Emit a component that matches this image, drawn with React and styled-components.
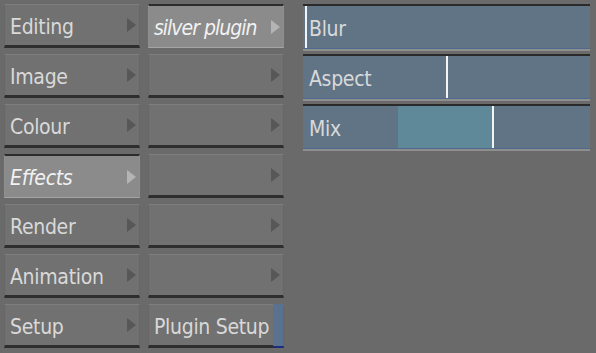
import React from "react";
import styled, { createGlobalStyle } from "styled-components";

const GlobalStyle = createGlobalStyle`
	html, body {
		margin: 0;
		padding: 0;
		background-color: #6a6a6a;
	}
`;

const menus = [
	{ label: "Editing", sub: "silver plugin", subActive: true },
	{ label: "Image" },
	{ label: "Colour" },
	{ label: "Effects", active: true },
	{ label: "Render" },
	{ label: "Animation" },
	{ label: "Setup", plugin: true },
];

const fields = [
	{ label: "Blur", marker: 2 },
	{ label: "Aspect", marker: 143 },
	{ label: "Mix", marker: 189, fillFrom: 95 },
];

export default function App() {
	return (
		<>
			<GlobalStyle />
			<Page>
				<Menus>
					{menus.map((m) => (
						<React.Fragment key={m.label}>
							<MenuButton $active={m.active}>
								<Label $italic={m.active}>{m.label}</Label>
								<Arrow $active={m.active} />
							</MenuButton>
							{m.plugin ? (
								<MenuButton $plugin>
									<Label>Plugin Setup</Label>
									<BlueTab />
								</MenuButton>
							) : (
								<MenuButton $active={m.subActive}>
									<Label $italic={m.subActive} $tight>{m.sub || ""}</Label>
									<Arrow $active={m.subActive} />
								</MenuButton>
							)}
						</React.Fragment>
					))}
				</Menus>

				<Fields>
					{fields.map((f) => (
						<Field key={f.label}>
							{f.fillFrom !== undefined && (
								<Fill style={{ left: f.fillFrom, width: f.marker - f.fillFrom }} />
							)}
							<Marker style={{ left: f.marker }} />
							<FieldLabel>{f.label}</FieldLabel>
						</Field>
					))}
				</Fields>
			</Page>
		</>
	);
}

const Page = styled.div`
	display: flex;
	align-items: flex-start;
	width: 596px;
	height: 353px;
	padding: 4px 0 0 4px;
	box-sizing: border-box;
	font-family: "DejaVu Sans Condensed", "DejaVu Sans", sans-serif;
	font-stretch: condensed;
`;

const Menus = styled.div`
	display: grid;
	grid-template-columns: 136px 136px;
	grid-auto-rows: 44px;
	column-gap: 8px;
	row-gap: 6px;
`;

const MenuButton = styled.div`
	position: relative;
	display: flex;
	align-items: center;
	box-sizing: border-box;
	padding: 0 3px 0 5px;
	background-color: ${(p) => (p.$active ? "#8b8b8b" : "#717171")};
	border-top: ${(p) => (p.$active ? "2px solid #2c2c2c" : "1px solid #7e7e7e")};
	border-bottom: ${(p) => (p.$active ? "1px solid #a4a4a4" : "3px solid #2e2e2e")};
	border-left: 1px solid ${(p) => (p.$active ? "#8f8f8f" : "#666")};
	border-right: 1px solid ${(p) => (p.$active ? "#8f8f8f" : "#666")};
	padding-right: ${(p) => (p.$plugin ? "0" : "3px")};
`;

const Label = styled.span`
	flex: 1;
	color: ${(p) => (p.$italic ? "#f2f2f2" : "#d9d9d9")};
	font-size: 21px;
	line-height: 1;
	padding-top: 4px;
	letter-spacing: ${(p) => (p.$tight ? "-1px" : "-0.3px")};
	font-style: ${(p) => (p.$italic ? "italic" : "normal")};
	white-space: nowrap;
	overflow: hidden;
`;

const Arrow = styled.span`
	width: 0;
	height: 0;
	border-top: 7px solid transparent;
	border-bottom: 7px solid transparent;
	border-left: 9px solid ${(p) => (p.$active ? "#b4b4b4" : "#575757")};
`;

const BlueTab = styled.span`
	align-self: stretch;
	width: 10px;
	margin-top: -1px;
	background-color: #5b7190;
	border-bottom: 2px solid #1e2a7e;
	margin-bottom: -3px;
`;

const Fields = styled.div`
	display: flex;
	flex-direction: column;
	gap: 5px;
	margin-left: 19px;
	width: 287px;
`;

const Field = styled.div`
	position: relative;
	height: 45px;
	box-sizing: border-box;
	display: flex;
	align-items: center;
	padding-left: 6px;
	background-color: #617486;
	border-top: 2px solid #2a2a2a;
	border-bottom: 1px solid #4f6a8e;
	box-shadow: 0 2px 0 #8e8e8e;
`;

const Fill = styled.span`
	position: absolute;
	top: 0;
	bottom: 0;
	background-color: #5f8898;
`;

const Marker = styled.span`
	position: absolute;
	top: 0;
	bottom: 0;
	width: 2px;
	background-color: #f4f4f4;
`;

const FieldLabel = styled.span`
	position: relative;
	color: #d9d9d9;
	font-size: 21px;
	line-height: 1;
	padding-top: 4px;
	letter-spacing: -0.3px;
`;
